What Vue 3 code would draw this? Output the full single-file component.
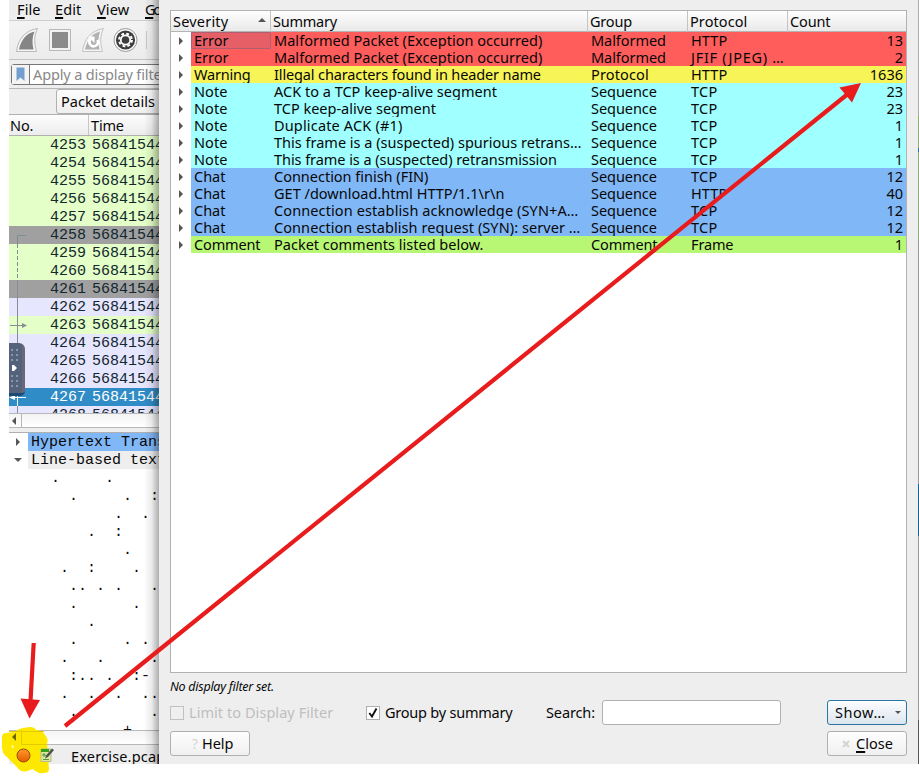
<script setup>
import { ref } from 'vue'

// Tracks a label out or in so that it takes up the given width.
const vFit = {
  mounted(el, { value }) {
    if (!value) return
    const natural = el.getBoundingClientRect().width
    const n = el.textContent.length
    const spacing = (value + 0.4 - natural) / n
    el.style.letterSpacing = spacing.toFixed(3) + 'px'
  }
}

const headers = [
  ['Severity', 55], ['Summary', 63.5], ['Group', 41.5], ['Protocol', 57], ['Count', 40]
]

const widths = {
  Error: 34, Warning: 56, Note: 33, Chat: 31, Comment: 66,
  Malformed: 74.5, Protocol: 57.5, Sequence: 65.5,
  HTTP: 36, 'JFIF (JPEG) …': 93, TCP: 26, Frame: 42
}

const rows = [
  ['Error', 'Malformed Packet (Exception occurred)', 268, 'Malformed', 'HTTP', 13],
  ['Error', 'Malformed Packet (Exception occurred)', 268, 'Malformed', 'JFIF (JPEG) …', 2],
  ['Warning', 'Illegal characters found in header name', 266.5, 'Protocol', 'HTTP', 1636],
  ['Note', 'ACK to a TCP keep-alive segment', 222.5, 'Sequence', 'TCP', 23],
  ['Note', 'TCP keep-alive segment', 161.5, 'Sequence', 'TCP', 23],
  ['Note', 'Duplicate ACK (#1)', 128, 'Sequence', 'TCP', 1],
  ['Note', 'This frame is a (suspected) spurious retrans…', 307, 'Sequence', 'TCP', 1],
  ['Note', 'This frame is a (suspected) retransmission', 282.5, 'Sequence', 'TCP', 1],
  ['Chat', 'Connection finish (FIN)', 154, 'Sequence', 'TCP', 12],
  ['Chat', 'GET /download.html HTTP/1.1\\r\\n', 230, 'Sequence', 'HTTP', 40],
  ['Chat', 'Connection establish acknowledge (SYN+A…', 304, 'Sequence', 'TCP', 12],
  ['Chat', 'Connection establish request (SYN): server …', 306, 'Sequence', 'TCP', 12],
  ['Comment', 'Packet comments listed below.', 209, 'Comment', 'Frame', 1]
]

const packets = [
  [4253, 'green'], [4254, 'green'], [4255, 'green'], [4256, 'green'], [4257, 'green'],
  [4258, 'gray'], [4259, 'green'], [4260, 'green'], [4261, 'gray'], [4262, 'lilac'],
  [4263, 'green'], [4264, 'lilac'], [4265, 'lilac'], [4266, 'lilac'], [4267, 'selected'],
  [4268, 'lilac']
]

const body = [
  '.     .',
  '  .     .  :',
  '       .  .',
  '    .  :',
  '        .',
  ' .  :    .',
  '  .. . .   .',
  '  .      .',
  '    .',
  '  .     . .',
  ' .   .     .',
  '  :.. .  :-',
  ' .  .  .  ..',
  '  .        .',
  '        +'
]

const grouped = ref(true)
</script>

<template>
  <div class="screen">
    <main class="capture">
      <nav class="menu">
        <span v-fit="24"><u>F</u>ile</span>
        <span v-fit="27"><u>E</u>dit</span>
        <span v-fit="33"><u>V</u>iew</span>
        <span v-fit="19"><u>G</u>o</span>
      </nav>

      <div class="tools">
        <svg width="24" height="26" viewBox="0 0 24 26">
          <path d="M.5 24.500C2 12 9 3.500 21.500 1.500C18 8.500 18 16 20.500 24.500Z" fill="#f6f6f6" stroke="#b9b9b9" />
          <path d="M3 22.500C5 13 10 6.500 18.500 4.500C16 10 16 16 17.500 22.500Z" fill="#858585" />
        </svg>
        <svg width="22" height="26" viewBox="0 0 22 26">
          <rect x=".5" y="2.500" width="21" height="21" fill="#f2f2f2" stroke="#b9b9b9" />
          <rect x="3" y="5" width="16" height="16" fill="#8c8c8c" />
        </svg>
        <svg width="24" height="26" viewBox="0 0 24 26">
          <path d="M1.500 24.500C3 12 10 3.500 22.500 1.500C19 8.500 19 16 21.500 24.500Z" fill="#f3f3f3" stroke="#c5c5c5" />
          <path d="M4 22.500C6 13 11 6.500 19 4.500C17 10 17 16 18.500 22.500Z" fill="#b2b2b2" />
          <path d="M9.500 12A4.300 4.300 0 1 0 16.500 13" fill="none" stroke="#fff" stroke-width="2.600" />
          <path d="M7 9.500H13.500V16Z" fill="#fff" />
        </svg>
        <svg class="gear" width="25" height="26" viewBox="0 0 25 26">
          <circle cx="12.500" cy="13" r="11.500" fill="#fafafa" stroke="#999" />
          <circle cx="12.500" cy="13" r="9.600" fill="#3d3d3d" />
          <circle cx="12.500" cy="13" r="6.400" fill="none" stroke="#fff" stroke-width="2" stroke-dasharray="2.800 2.226" />
          <circle cx="12.500" cy="13" r="4.700" fill="#3d3d3d" stroke="#fff" stroke-width="1.800" />
        </svg>
        <i class="divider"></i>
      </div>

      <div class="filterbar">
        <div class="filter">
          <span class="mark">
            <svg width="9" height="15" viewBox="0 0 9 15"><path d="M.5.500H8.500V14L4.500 10.500L.5 14Z" fill="#729fcf" /></svg>
          </span>
          <span v-fit="137" class="hint">Apply a display filter</span>
        </div>
      </div>

      <div class="searchbar">
        <button class="details"><span v-fit="93.500">Packet details</span></button>
      </div>

      <div class="listhead">
        <div class="no"><span v-fit="23">No.</span></div>
        <div class="time"><span v-fit="32.500">Time</span></div>
      </div>
      <div class="packets">
        <div v-for="[no, tone] in packets" :key="no" class="packet" :class="tone">
          <span class="num">{{ no }}</span><span>568415447</span>
        </div>
        <svg class="links" width="22" height="277" viewBox="0 0 22 277" fill="none">
          <path d="M17 99.500H8.500V108" stroke="#7f8d92" />
          <path d="M8.500 108V145" stroke="#7f8d92" stroke-dasharray="4 2" />
          <path d="M8.500 145V252M1 189.500H14" stroke="#868d97" />
          <path d="M13 187V192L18 189.500Z" fill="#868d97" />
          <path d="M8.500 252V270M4 261.500H17" stroke="#fff" />
          <path d="M6 259V264L0 261.500Z" fill="#fff" />
          <path d="M8.500 270V277" stroke="#868d97" />
        </svg>
        <div class="handle">
          <svg width="14" height="50" viewBox="0 0 14 50">
            <g stroke="#8c96a8" stroke-width="2" stroke-dasharray="2 3">
              <path d="M3 6V18M8 6V18M3 32V44M8 32V44" />
            </g>
            <path d="M3 22H5L8 25L5 28H3Z" fill="#fff" />
          </svg>
        </div>
      </div>
      <div class="hscroll"><b><i></i></b></div>

      <div class="tree">
        <div class="node proto"><i class="right"></i><span>Hypertext Transfer</span></div>
        <div class="node plain"><i class="down"></i><span>Line-based text</span></div>
        <pre>{{ body.join('\n') }}</pre>
      </div>
      <div class="hscroll"><b><i></i></b></div>

      <footer class="status">
        <svg class="blot" width="50" height="48" viewBox="0 0 50 48">
          <path d="M3 11Q3 7 7 7L16 6Q18 3 24 2L31 1Q36 1 37 4Q43 4 46 9Q50 13 48 18L50 43Q50 47 45 47Q38 48 34 43L28 45Q22 47 18 41L8 31Q3 28 3 21Z" fill="#ffe800" />
          <path d="M17 7V15L13 11Z" fill="#6d6400" />
          <path d="M22.500 4V18.500M22.500 18.500H48M10 5.500H45" stroke="#e0cc00" stroke-width="1" fill="none" />
          <path d="M12 19L14 23L15 20Z" fill="#fff9b0" />
        </svg>
        <svg class="expert" width="15" height="15" viewBox="0 0 15 15">
          <defs><linearGradient id="orb" x1="0" y1="0" x2="0" y2="1"><stop offset="0" stop-color="#ff9b2b" /><stop offset="1" stop-color="#e55b00" /></linearGradient></defs>
          <circle cx="7.500" cy="7.500" r="6.500" fill="url(#orb)" stroke="#9c4a08" />
        </svg>
        <svg class="note" width="15" height="15" viewBox="0 0 15 15">
          <path d="M1 1H11V13.500H1Z" fill="#e4e6a5" stroke="#b4bd83" />
          <path d="M1 1H9V4H1Z" fill="#35a018" />
          <path d="M2 7H6M4 5V9M3 11.500H9" stroke="#489d31" />
          <path d="M5 10.500L6 7.500L12 .500L14 2L8 9Z" fill="#4e514d" />
        </svg>
        <span v-fit="90">Exercise.pcap</span>
      </footer>
    </main>

    <section class="dialog">
      <div class="table">
        <div class="row head">
          <div v-for="[label, w] in headers" :key="label" class="cell">
            <span v-fit="w">{{ label }}</span>
            <i v-if="label === 'Severity'" class="sort"></i>
          </div>
        </div>
        <div v-for="(r, i) in rows" :key="i" class="row item" :class="r[0].toLowerCase()">
          <div class="expand"><i></i></div>
          <div class="cell" :class="{ current: i === 0 }"><span v-fit="widths[r[0]]">{{ r[0] }}</span></div>
          <div class="cell"><span v-fit="r[2]">{{ r[1] }}</span></div>
          <div class="cell"><span v-fit="widths[r[3]]">{{ r[3] }}</span></div>
          <div class="cell"><span v-fit="widths[r[4]]">{{ r[4] }}</span></div>
          <div class="cell count">{{ r[5] }}</div>
        </div>
      </div>

      <div class="info"><span v-fit="103.500">No display filter set.</span></div>

      <div class="options">
        <span class="box off"></span>
        <span class="limit"><span v-fit="144">Limit to Display Filter</span></span>
        <span class="box" @click="grouped = !grouped">
          <svg v-if="grouped" width="12" height="12" viewBox="0 0 12 12"><path d="M2.300 6L5 9.500L9.500 1.500" fill="none" stroke="#111" stroke-width="1.900" /></svg>
        </span>
        <span class="group"><span v-fit="127">Group by summary</span></span>
        <span class="search"><span v-fit="48.500">Search:</span></span>
        <span class="field"></span>
        <button class="btn show"><span v-fit="50">Show…</span><i></i></button>
      </div>

      <div class="actions">
        <button class="btn help"><em>?</em><span v-fit="31">Help</span></button>
        <button class="btn close">
          <svg width="8" height="8" viewBox="0 0 8 8"><path d="M1 1L7 7M7 1L1 7" stroke="#d4d4d4" stroke-width="2" /></svg>
          <span v-fit="36.500"><u>C</u>lose</span>
        </button>
      </div>
    </section>

    <div class="edge"></div>

    <svg class="arrows" width="919" height="777" viewBox="0 0 919 777">
      <g stroke="#e81c1c" fill="#e81c1c">
        <path d="M33.700 643L30.500 701" stroke-width="4.200" fill="none" />
        <path d="M20.500 698.500L40 700L29.500 718.500Z" stroke="none" />
        <path d="M65 726L849 93" stroke-width="4.200" fill="none" />
        <path d="M861 83L839.500 87.500L852 102.500Z" stroke="none" />
      </g>
    </svg>
  </div>
</template>

<style>
body { background: #fff; overflow: hidden; }
</style>

<style scoped>
.screen {
  position: relative;
  width: 919px;
  height: 777px;
  overflow: hidden;
  padding-left: 9px;
  box-sizing: border-box;
  font: 14.5px/17px "Noto Sans", "Open Sans", sans-serif;
  color: #080808;
  white-space: nowrap;
}
.screen * { box-sizing: border-box; }
u { text-decoration-thickness: 1.5px; text-underline-offset: 2px; text-decoration-skip-ink: none; }
button { font: inherit; color: inherit; padding: 0; }

.capture {
  position: relative;
  width: 150px;
  height: 764px;
  background: #eee;
}
.capture::after {
  content: "";
  position: absolute;
  top: 0;
  right: 0;
  width: 15px;
  height: 764px;
  background: linear-gradient(to right, transparent, rgba(0, 0, 0, .08) 50%, rgba(0, 0, 0, .32));
}
.menu { display: flex; height: 21px; padding: 1px 0 0 8px; border-bottom: 1px solid #cfcfcf; overflow: hidden; }
.menu span { width: 24px; margin-right: 14px; flex: none; }
.menu span:nth-child(2) { width: 27px; margin-right: 15px; }
.menu span:nth-child(3) { width: 33px; margin-right: 15px; }
.tools {
  display: flex;
  height: 39px;
  padding: 6px 0 0 7px;
  gap: 9px;
  background: linear-gradient(#f3f3f3, #ececec);
  border-bottom: 1px solid #c2c2c2;
}
.tools svg { flex: none; }
.tools svg:nth-child(3) { margin-left: 1px; margin-right: -1px; }
.divider { width: 1px; height: 18px; margin: 4px 0 0 -1px; background: #c8c8c8; }
.filterbar { height: 29px; padding: 4px 0 0 2px; border-bottom: 1px solid #b9b9b9; overflow: hidden; }
.filter {
  display: flex;
  width: 190px;
  height: 21px;
  background: #fff;
  border: 1px solid #777;
  border-radius: 3px;
}
.mark { width: 18px; padding: 2px 0 0 4px; border-right: 1px solid #777; background: #f4f4f4; }
.mark svg { display: block; }
.hint { padding-left: 3px; line-height: 19px; color: #888; }
.searchbar { height: 25px; padding-left: 47px; overflow: hidden; }
.details {
  width: 120px;
  height: 25px;
  padding-left: 4px;
  text-align: left;
  background: linear-gradient(#fcfcfc, #efefef);
  border: 1px solid #b0b0b0;
  border-radius: 3px;
}
.listhead {
  display: flex;
  height: 22px;
  background: linear-gradient(#fdfdfd, #ececec);
  border-top: 1px solid #b0b0b0;
  border-bottom: 1px solid #b0b0b0;
  line-height: 21px;
}
.no { width: 80px; padding-left: 1px; border-right: 1px solid #c6c6c6; }
.time { padding-left: 2px; }
.packets {
  position: relative;
  height: 277px;
  overflow: hidden;
  font: 15px/19px "Liberation Mono", monospace;
  color: #12272e;
}
.packet { height: 18px; display: flex; overflow: hidden; }
.num { width: 83px; padding-left: 41px; flex: none; }
.green { background: #e4ffc7; }
.gray { background: #a0a0a0; }
.lilac { background: #e7e6ff; }
.selected { background: #308cc6; color: #fff; }
.links { position: absolute; left: 0; top: 0; }
.handle {
  position: absolute;
  left: 0;
  top: 207px;
  width: 16px;
  height: 53px;
  overflow: hidden;
  background: linear-gradient(to right, #54627b 13px, #6a6778 13px);
  border-bottom: 3px solid #1d4a73;
  border-radius: 0 6px 5px 0;
}
.handle svg { display: block; }
.hscroll { height: 15px; background: linear-gradient(#f4f4f4, #fff); border: solid #b8b8b8; border-width: 1px 0; }
.hscroll b { display: block; width: 13px; height: 13px; padding: 3px 0 0 3px; border-right: 1px solid #b8b8b8; }
.hscroll i { display: block; border: solid transparent; border-width: 4px 4px 4px 0; border-right-color: #555; width: 0; }
.tree {
  height: 298px;
  margin-top: 4px;
  overflow: hidden;
  background: #fff;
  border-top: 1px solid #b0b0b0;
  font: 15px/19px "Liberation Mono", monospace;
}
.node { display: flex; height: 18px; }
.node span { width: 131px; padding-left: 3px; overflow: hidden; }
.node i { width: 19px; flex: none; }
.node i::before { content: ""; display: block; border: solid transparent; width: 0; }
.right::before { margin: 5px 0 0 7px; border-width: 4px 0 4px 4px !important; border-left-color: #555 !important; }
.down::before { margin: 7px 0 0 5px; border-width: 4px 4px 0 4px !important; border-top-color: #555 !important; }
.proto span { background: #80b7f7; }
.plain span { background: #eee; }
pre { margin: 1px 0 0 42px; font: 15px/18px "Liberation Mono", monospace; }
.status {
  position: relative;
  height: 19px;
  padding: 2px 0 0 62px;
}
.status > span { display: block; width: 88px; height: 17px; line-height: 19px; overflow: hidden; }
.blot { position: absolute; left: -10px; top: -19px; }
.expert { position: absolute; left: 7px; top: 3px; }
.note { position: absolute; left: 31px; top: 3px; }

.dialog {
  position: absolute;
  left: 159px;
  top: 0;
  width: 759px;
  height: 764px;
  padding: 10px 11px 0;
  background: #eee;
}
.table { height: 663px; background: #fff; border: 1px solid #b2b2b2; }
.row { display: grid; }
.head {
  grid-template-columns: 100px 317px 100px 100px 118px;
  height: 21px;
  background: linear-gradient(#fefefe, #e9e9e9);
  border-bottom: 1px solid #b4b4b4;
  line-height: 21px;
}
.head .cell { position: relative; padding-left: 2px; border-right: 1px solid #c3c3c3; }
.head .cell:last-child { border-right: 0; }
.sort { position: absolute; right: 4px; top: 7px; border: solid transparent; border-width: 0 4px 4px; border-bottom-color: #555; }
.item { grid-template-columns: 20px 80px 317px 100px 100px 118px; height: 17px; line-height: 17px; }
.item .cell { padding-left: 3px; background: var(--tone); }
.item .count { padding-right: 3px; text-align: right; }
.expand i { display: block; width: 0; margin: 5px 0 0 8px; border: solid transparent; border-width: 4px 0 4px 4px; border-left-color: #555; }
.error { --tone: #ff5c5c; }
.warning { --tone: #f7f457; }
.item.note { position: static; --tone: #a0ffff; }
.chat { --tone: #80b7f7; }
.comment { --tone: #b8f774; }
.item .current { background: #e65f67; box-shadow: inset 0 0 0 1px #b05f70; border-radius: 1px; }
.info { height: 27px; padding: 4px 0 0 0; font-size: 12.5px; line-height: 19px; font-style: italic; }
.options { display: flex; align-items: center; height: 25px; }
.box { width: 14px; height: 14px; flex: none; background: #fff; border: 1px solid #b0b0b0; }
.box svg { display: block; }
.off { background: #efefef; border-color: #c0c0c0; }
.limit { width: 182px; padding-left: 5px; color: #bebebe; }
.group { width: 166px; padding-left: 5px; }
.search { width: 56px; }
.field { width: 179px; height: 25px; background: #fff; border: 1px solid #b0b0b0; border-radius: 3px; }
.btn {
  display: flex;
  align-items: center;
  width: 80px;
  height: 25px;
  background: linear-gradient(#fefefe, #f0f0f0);
  border: 1px solid #b0b0b0;
  border-radius: 3px;
}
.show { margin-left: auto; padding-left: 7px; background: linear-gradient(#fcfdfe, #dce5ed); border-color: #2a77a5; }
.show i { margin-left: 10px; border: solid transparent; border-width: 3px 3px 0; border-top-color: #555; }
.actions { display: flex; justify-content: space-between; margin-top: 6px; }
.help { padding-left: 17px; }
.help em { width: 14px; font-style: normal; color: #d6d6d6; }
.close { padding-left: 14px; gap: 6px; }

.edge {
  position: absolute;
  left: 918px;
  top: 0;
  width: 1px;
  height: 764px;
  background: linear-gradient(#aaa 0 116px, #92ac74 116px 148px, #356fa0 148px 152px, #92ac74 152px 240px, #999 240px 484px, #17618e 484px 536px, #999 536px 720px, #555 720px);
}
.arrows { position: absolute; left: 0; top: 0; pointer-events: none; }
</style>
